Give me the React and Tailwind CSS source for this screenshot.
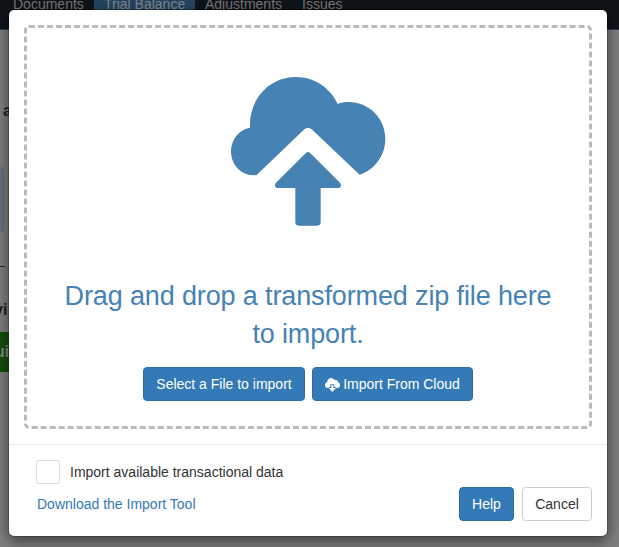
function CloudUpload() {
  return (
    <svg className="ml-[193px] block h-[170px] w-[180px]" viewBox="0 0 540 510" fill="#4682b4" aria-hidden="true">
      <path d="M110 330 C66 336 33 301 33 259 C33 223 57 194 90 188 C86 102 149 36 227 36 C284 36 331 69 353 117 C363 113 374 111 386 111 C447 111 496 160 496 221 C496 271 465 313 419 329 L275 193 Q264 183 253 193 Z" />
      <path d="M257 265 Q264 257 271 265 L360 353 Q367 363 358 369 H302 V472 Q302 482 292 482 H236 Q226 482 226 472 V369 H171 Q160 363 168 353 Z" />
    </svg>
  );
}

function CloudDownload() {
  return (
    <svg className="mr-[3px] mt-px h-[14px] w-[15px] shrink-0" viewBox="0 0 15 14" aria-hidden="true">
      <path fill="#fff" d="M3 10 C1.2 10 0 8.8 0 7.2 C0 5.6 1 4.5 2.2 4.3 C2.3 1.8 3.8 0 6.2 0 C7.9 0 9.2 1 9.8 2.3 C10.3 2 10.8 2 11.2 2.1 C12.4 2.3 13 3.2 12.9 4.2 C14.2 4.4 15 5.4 15 7 C15 8.8 13.9 10 12.3 10 H11 L10.5 9 H9.3 V6.2 H5.3 V9 H4.2 L3.4 10 Z" />
      <path fill="#fff" d="M6.3 7 H8.4 V10 H11 L7.3 14 L3.6 10 H6.3 Z" />
    </svg>
  );
}

function Button({ children, className = "" }) {
  return (
    <button
      type="button"
      className={"flex h-[34px] items-center justify-center whitespace-nowrap rounded border text-[14px] leading-5 " + className}
    >
      {children}
    </button>
  );
}

function PageBehind() {
  return (
    <div className="h-full bg-[#808080]">
      <nav className="flex h-[30px] overflow-hidden border-b border-[#1f3a52] bg-[#101418] text-[14px] leading-5 text-[#777879]">
        <span className="-mt-[6px] w-[94px] pl-[13px]">Documents</span>
        <span className="h-[29px] w-[101px] bg-[#234563] pl-[10px] text-[#85898c]">
          <span className="-mt-[6px] block">Trial Balance</span>
        </span>
        <span className="-mt-[6px] w-[107px] pl-[10px]">Adjustments</span>
        <span className="-mt-[6px]">Issues</span>
      </nav>
      <div className="flex w-[9px] flex-col overflow-hidden text-[16px] font-bold leading-5 text-[#1b2024]">
        <div className="mt-[71px] h-5 pl-[3px]">a</div>
        <div className="mt-[46px] h-[65px] w-[5px] rounded-r-sm bg-[#6c7483]" />
        <div className="mt-[34px] h-px w-[5px] bg-[#172c2c]" />
        <div className="-ml-[6px] mt-[33px] h-5">vi</div>
        <div className="mt-[12px] h-10 bg-[#164f0b] leading-10 text-[#85927f]">
          <span className="-ml-[5px]">ui</span>
        </div>
      </div>
    </div>
  );
}

export default function App() {
  return (
    <main className="relative h-[547px] w-[619px] overflow-hidden font-['Liberation_Sans',Arial,sans-serif] text-[14px]">
      <PageBehind />
      <section
        role="dialog"
        className="absolute left-2 top-[9px] flex h-[528px] w-[600px] flex-col rounded-md border border-black/20 bg-white bg-clip-padding shadow-[0_5px_15px_rgba(0,0,0,0.5)]"
      >
        <div className="p-[15px]">
          <div className="h-[404px] rounded-[5px] border-[3px] border-dashed border-[#bbb] pt-[37px] text-center">
            <CloudUpload />
            <p className="mx-auto mt-[42px] w-[500px] text-[27px] leading-[38px] tracking-[-0.13px] text-[#4682b4]">
              Drag and drop a transformed zip file here to import.
            </p>
            <div className="mt-[14px] flex justify-center gap-[7px]">
              <Button className="w-[162px] border-[#2e6da4] bg-[#337ab7] text-white">Select a File to import</Button>
              <Button className="w-[161px] border-[#2e6da4] bg-[#337ab7] text-white">
                <CloudDownload />
                Import From Cloud
              </Button>
            </div>
          </div>
        </div>
        <footer className="flex flex-1 flex-col border-t border-[#e5e5e5] px-[15px] pt-[15px]">
          <label className="ml-3 flex h-6 items-center text-[#333]">
            <span className="mr-[10px] h-6 w-6 rounded-[2px] border border-[#ddd]" />
            Import available transactional data
          </label>
          <div className="mt-[3px] flex items-center">
            <a className="ml-[13px] mr-auto text-[#337ab7]">Download the Import Tool</a>
            <Button className="mr-2 w-[55px] border-[#2e6da4] bg-[#337ab7] text-white">Help</Button>
            <Button className="w-[70px] border-[#ccc] bg-white text-[#333]">Cancel</Button>
          </div>
        </footer>
      </section>
    </main>
  );
}
